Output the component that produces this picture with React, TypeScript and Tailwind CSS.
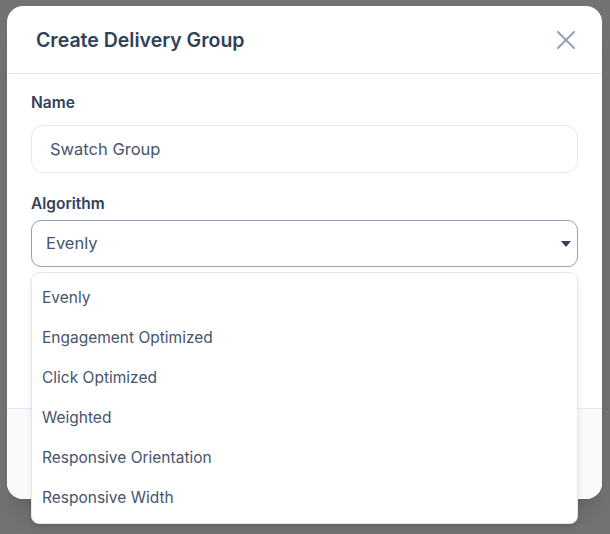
const OPTIONS = [
  "Evenly",
  "Engagement Optimized",
  "Click Optimized",
  "Weighted",
  "Responsive Orientation",
  "Responsive Width",
];

export default function App() {
  return (
    <div className="h-[534px] w-[610px] overflow-hidden bg-[#737373] pl-[7px] pt-[6px] font-['Inter',sans-serif]">
      <div className="relative flex h-[493px] w-[595px] flex-col rounded-2xl bg-white shadow-xl">
        <header className="flex h-[68px] shrink-0 items-center justify-between border-b border-slate-200 pl-[29px] pr-[26px]">
          <h2 className="pt-[2px] text-[19.5px] font-semibold text-slate-700">
            Create Delivery Group
          </h2>
          <button className="flex size-5 items-center justify-center text-slate-400">
            <svg width="18" height="18" viewBox="0 0 18 18" fill="none">
              <path
                d="M1 1l16 16M17 1L1 17"
                stroke="currentColor"
                strokeWidth="2"
                strokeLinecap="round"
              />
            </svg>
          </button>
        </header>

        <main className="relative flex-1 px-6 pt-[19px]">
          <label className="block text-[15.5px] font-semibold leading-5 text-slate-700">
            Name
          </label>
          <div className="mt-3 flex h-12 items-center rounded-xl border border-slate-200 px-[18px] text-[16.5px] text-slate-600">
            Swatch Group
          </div>

          <label className="mt-[21px] block text-[15.5px] font-semibold leading-5 text-slate-700">
            Algorithm
          </label>
          <div className="relative mt-[6px]">
            <div className="flex h-[47px] items-center justify-between rounded-[10px] border border-slate-400 pl-[14px] pr-[6px] text-[16.5px] text-slate-600">
              Evenly
              <svg width="10" height="6" viewBox="0 0 10 6" className="text-slate-700">
                <path d="M0 0h10L5 6z" fill="currentColor" />
              </svg>
            </div>
            <ul className="absolute left-0 right-0 top-[52px] z-10 rounded-lg border border-slate-200 bg-white py-[5px] shadow-md">
              {OPTIONS.map((o) => (
                <li
                  key={o}
                  className="flex h-10 items-center px-2.5 text-[15.5px] text-slate-600"
                >
                  {o}
                </li>
              ))}
            </ul>
          </div>
        </main>

        <footer className="h-[91px] shrink-0 rounded-b-2xl border-t border-slate-200 bg-slate-50" />
      </div>
    </div>
  );
}
